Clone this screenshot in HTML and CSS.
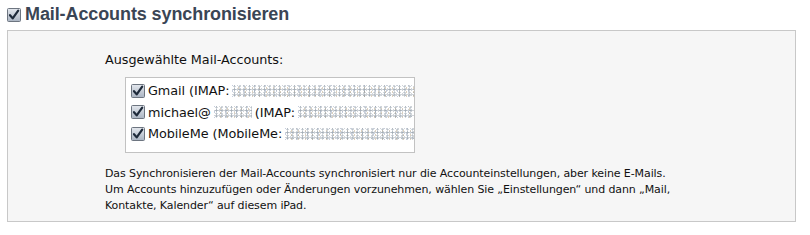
FILE: index.html
```html
<!DOCTYPE html>
<html lang="de">
<head>
<meta charset="utf-8">
<link rel="stylesheet" href="styles.css">
</head>
<body>
<div class="page">
  <div class="title">
    <svg class="cb cb-big" viewBox="0 0 14 14"><rect x="0.5" y="0.5" width="13" height="13" rx="1" fill="url(#g1)" stroke="#6d7580"/><path d="M3 7.2 L5.7 10.4 L11.2 2.6" fill="none" stroke="#1e2a3a" stroke-width="2.2" stroke-linecap="round" stroke-linejoin="round"/><defs><linearGradient id="g1" x1="0" y1="0" x2="0" y2="1"><stop offset="0" stop-color="#e4e8ee"/><stop offset="1" stop-color="#aab4c2"/></linearGradient></defs></svg>
    <h1>Mail-Accounts synchronisieren</h1>
  </div>
  <div class="panel">
    <div class="label">Ausgewählte Mail-Accounts:</div>
    <div class="list">
      <div class="row">
        <svg class="cb" viewBox="0 0 14 14"><rect x="0.5" y="0.5" width="13" height="13" rx="1" fill="url(#g1)" stroke="#6d7580"/><path d="M3 7.2 L5.7 10.4 L11.2 2.6" fill="none" stroke="#1e2a3a" stroke-width="2.2" stroke-linecap="round" stroke-linejoin="round"/></svg>
        <span>Gmail (IMAP:</span><span class="blur w1"></span>
      </div>
      <div class="row">
        <svg class="cb" viewBox="0 0 14 14"><rect x="0.5" y="0.5" width="13" height="13" rx="1" fill="url(#g1)" stroke="#6d7580"/><path d="M3 7.2 L5.7 10.4 L11.2 2.6" fill="none" stroke="#1e2a3a" stroke-width="2.2" stroke-linecap="round" stroke-linejoin="round"/></svg>
        <span>michael@</span><span class="blur w2"></span><span>(IMAP:</span><span class="blur w1"></span>
      </div>
      <div class="row">
        <svg class="cb" viewBox="0 0 14 14"><rect x="0.5" y="0.5" width="13" height="13" rx="1" fill="url(#g1)" stroke="#6d7580"/><path d="M3 7.2 L5.7 10.4 L11.2 2.6" fill="none" stroke="#1e2a3a" stroke-width="2.2" stroke-linecap="round" stroke-linejoin="round"/></svg>
        <span>MobileMe (MobileMe:</span><span class="blur w1"></span>
      </div>
    </div>
    <p class="note">Das Synchronisieren der Mail-Accounts synchronisiert nur die Accounteinstellungen, aber keine E-Mails.<br>Um Accounts hinzuzufügen oder Änderungen vorzunehmen, wählen Sie „Einstellungen“ und dann „Mail,<br>Kontakte, Kalender“ auf diesem iPad.</p>
  </div>
</div>
</body>
</html>
```
FILE: styles.css
```css
html, body {
  margin: 0;
  padding: 0;
  background: #ffffff;
}
.page {
  width: 810px;
  height: 235px;
  font-family: "DejaVu Sans", "Liberation Sans", sans-serif;
  color: #111;
}
.title {
  display: flex;
  align-items: center;
  gap: 4px;
  height: 30px;
  padding-left: 7px;
  box-sizing: border-box;
  padding-bottom: 1px;
}
.cb {
  width: 14px;
  height: 14px;
  flex: none;
  display: block;
}
.title h1 {
  margin: 0;
  font-family: "Liberation Sans", Arial, sans-serif;
  font-weight: bold;
  font-size: 18px;
  color: #3a4555;
  letter-spacing: -0.1px;
}
.panel {
  margin: 0 14px 0 7px;
  height: 192px;
  box-sizing: border-box;
  border: 1px solid #c8c8c8;
  background: #f6f6f6;
  padding: 21px 0 0 97px;
}
.label {
  font-size: 12.8px;
  line-height: 16px;
  color: #111;
  letter-spacing: -0.05px;
}
.list {
  margin: 9px 0 0 20px;
  width: 290px;
  height: 76px;
  box-sizing: border-box;
  border: 1px solid #c2c2c2;
  background: #ffffff;
  overflow: hidden;
  padding: 2px 0 0 5px;
}
.row {
  display: flex;
  align-items: center;
  gap: 3px;
  height: 21.5px;
  font-size: 12.8px;
  white-space: nowrap;
  letter-spacing: -0.05px;
}
.blur {
  display: inline-block;
  height: 12px;
  flex: none;
  background-image:
    radial-gradient(circle, rgba(120,135,150,0.5) 0.9px, transparent 1.2px),
    radial-gradient(circle, rgba(175,182,190,0.6) 1px, transparent 1.3px),
    radial-gradient(circle, rgba(176,150,110,0.45) 0.8px, transparent 1.1px),
    radial-gradient(circle, rgba(110,130,170,0.4) 0.8px, transparent 1.1px);
  background-size: 5px 3px, 3px 5px, 7px 4px, 11px 6px;
  background-position: 0 0, 1px 2px, 3px 1px, 6px 3px;
}
.w1 { width: 260px; }
.w2 { width: 38px; }
.note {
  margin: 13px 0 0 0;
  font-size: 11px;
  line-height: 16px;
  color: #111;
  letter-spacing: -0.1px;
}
```
